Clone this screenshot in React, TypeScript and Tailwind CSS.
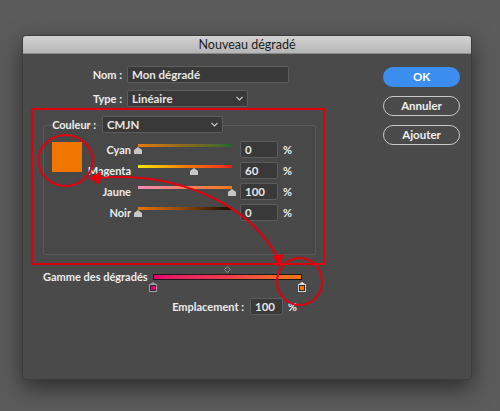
import React from 'react'

const font = { fontFamily: 'Lato, "Open Sans", "Liberation Sans", sans-serif' }

function Chevron() {
  return (
    <svg className="w-[7px] h-[5px] text-[#c8c8c8]" viewBox="0 0 7 5" fill="none" stroke="currentColor" strokeWidth="1.1">
      <path d="M0.5 1 L3.5 4 L6.5 1" />
    </svg>
  )
}

function Thumb() {
  return (
    <svg width="8" height="7" viewBox="0 0 8 7">
      <polygon points="4,0 8,3 8,7 0,7 0,3" fill="#c6c6c6" />
    </svg>
  )
}

function Field({ value, w }: { value: string; w: string }) {
  return (
    <div className={`${w} h-[17px] bg-[#393939] border border-[#5c5c5c] rounded-[2px] flex items-center px-[4px] text-[11.5px] font-bold text-[#e6e6e6]`}>
      {value}
    </div>
  )
}

const rows = [
  { label: 'Cyan', value: '0', track: 'bg-linear-to-r from-[#e47a0e] via-[#8a6a1a] to-[#1d6a2c]', thumb: 'left-[-4px]' },
  { label: 'Magenta', value: '60', track: 'bg-linear-to-r from-[#f4ea00] via-[#f27a08] to-[#f0161a]', thumb: 'left-[52px]' },
  { label: 'Jaune', value: '100', track: 'bg-linear-to-r from-[#f48ab4] via-[#f08060] to-[#f07800]', thumb: 'left-[90px]' },
  { label: 'Noir', value: '0', track: 'bg-linear-to-r from-[#e67600] via-[#8a4500] to-[#1a0c00]', thumb: 'left-[-4px]' },
]

export default function App() {
  return (
    <div className="relative w-[500px] h-[411px] bg-[#5b5b5b] pt-[35px] pl-[22px] overflow-hidden leading-[14px]" style={font}>
      <div className="w-[450px] h-[345px] bg-[#4a4a4a] rounded-[4px] shadow-[0_8px_22px_rgba(0,0,0,0.5)] overflow-hidden border border-[#3c3c3c]">
        <div className="h-[18px] bg-linear-to-b from-[#d2d2d2] to-[#b6b6b6] flex items-center justify-center text-[12.5px] text-[#1e1e1e] border-b border-[#8a8a8a]">
          Nouveau dégradé
        </div>
        <div className="flex">
          <div className="w-[360px] text-[11px] font-bold text-[#ececec]">
            <div className="mt-[12px] flex items-center gap-[5px]">
              <div className="w-[99px] text-right">Nom :</div>
              <Field value="Mon dégradé" w="w-[162px]" />
            </div>
            <div className="mt-[7px] flex items-center gap-[5px]">
              <div className="w-[99px] text-right">Type :</div>
              <div className="w-[121px] h-[17px] bg-[#393939] border border-[#5c5c5c] rounded-[2px] flex items-center justify-between px-[4px] text-[11.5px] text-[#e6e6e6]">
                <span>Linéaire</span>
                <Chevron />
              </div>
            </div>

            <div className="ml-[20px] mt-[18px] w-[273px] h-[130px] border border-[#585858] rounded-[2px] bg-[#484848]">
              <div className="-mt-[10px] flex items-center">
                <div className="w-[55px] text-right pr-[3px]">Couleur :</div>
                <div className="ml-[3px] w-[121px] h-[17px] bg-[#393939] border border-[#5c5c5c] rounded-[2px] flex items-center justify-between px-[4px] text-[11.5px] text-[#e6e6e6]">
                  <span>CMJN</span>
                  <Chevron />
                </div>
              </div>
              <div className="flex">
                <div className="ml-[8px] mt-[9px] w-[30px] h-[30px] bg-[#f07600]" />
                <div className="mt-[6px]">
                  {rows.map((r) => (
                    <div key={r.label} className="h-[21px] flex items-center">
                      <div className="w-[49px] text-right whitespace-nowrap">{r.label}</div>
                      <div className="relative ml-[7px] w-[94px] h-[21px]">
                        <div className={`absolute left-0 right-0 top-[5px] h-[2.5px] ${r.track}`} />
                        <div className={`absolute top-[8px] ${r.thumb} leading-none`}>
                          <Thumb />
                        </div>
                      </div>
                      <div className="ml-[8px]">
                        <Field value={r.value} w="w-[38px]" />
                      </div>
                      <div className="ml-[5px]">%</div>
                    </div>
                  ))}
                </div>
              </div>
            </div>

            <div className="mt-[11px] flex items-start">
              <div className="ml-[20px] w-[110px] mt-[4px] leading-[13px] whitespace-nowrap">Gamme des dégradés</div>
              <div className="relative w-[149px]">
                <div className="h-[7px] flex justify-center">
                  <svg width="7" height="7" viewBox="0 0 7 7">
                    <polygon points="3.5,0.5 6.5,3.5 3.5,6.5 0.5,3.5" fill="none" stroke="#8e8e8e" strokeWidth="1" />
                  </svg>
                </div>
                <div className="mt-[1px] h-[6px] border border-[#1a1a1a] bg-linear-to-r from-[#e6006f] via-[#ee3b4a] to-[#f07800]" />
                <div className="h-[12px]" />
                <div className="absolute left-[-4px] top-[16px] leading-none">
                  <svg width="8" height="10" viewBox="0 0 8 10">
                    <polygon points="4,0 7.5,2.5 0.5,2.5" fill="#9a9a9a" />
                    <rect x="0.5" y="2.5" width="7" height="7" fill="#2a2a2a" stroke="#a0a0a0" strokeWidth="1" />
                    <rect x="2" y="4" width="4" height="4" fill="#e6006f" />
                  </svg>
                </div>
                <div className="absolute right-[-4px] top-[16px] leading-none">
                  <svg width="8" height="10" viewBox="0 0 8 10">
                    <polygon points="4,0 7.5,2.5 0.5,2.5" fill="#eeeeee" />
                    <rect x="0.5" y="2.5" width="7" height="7" fill="#2a2a2a" stroke="#d0d0d0" strokeWidth="1" />
                    <rect x="2" y="4" width="4" height="4" fill="#f07800" />
                  </svg>
                </div>
              </div>
            </div>

            <div className="mt-[6px] flex items-center">
              <div className="w-[221px] text-right">Emplacement :</div>
              <div className="ml-[6px]">
                <Field value="100" w="w-[33px]" />
              </div>
              <div className="ml-[5px]">%</div>
            </div>
          </div>

          <div className="pt-[13px] flex flex-col gap-[9px] text-[11.5px] font-bold">
            <div className="w-[77px] h-[20px] rounded-full bg-[#3b8ef0] text-white flex items-center justify-center">OK</div>
            <div className="w-[77px] h-[20px] rounded-full border border-[#c8c8c8] text-[#f0f0f0] flex items-center justify-center">Annuler</div>
            <div className="w-[77px] h-[20px] rounded-full border border-[#c8c8c8] text-[#f0f0f0] flex items-center justify-center">Ajouter</div>
          </div>
        </div>
      </div>

      <svg className="absolute left-0 top-0 pointer-events-none" width="500" height="411" viewBox="0 0 500 411">
        <g fill="none" stroke="#e2000c" strokeWidth="2">
          <rect x="32" y="109" width="292" height="155" />
          <ellipse cx="65.5" cy="160.5" rx="27" ry="25.5" />
          <ellipse cx="299.5" cy="281.5" rx="22.5" ry="23.5" />
          <path d="M98 178 C170 172, 245 198, 278 258" />
        </g>
        <polygon points="88,178 101,171.5 100,184.5" fill="#e2000c" />
        <polygon points="279.5,268 272.5,256 284,254" fill="#e2000c" />
      </svg>
    </div>
  )
}
